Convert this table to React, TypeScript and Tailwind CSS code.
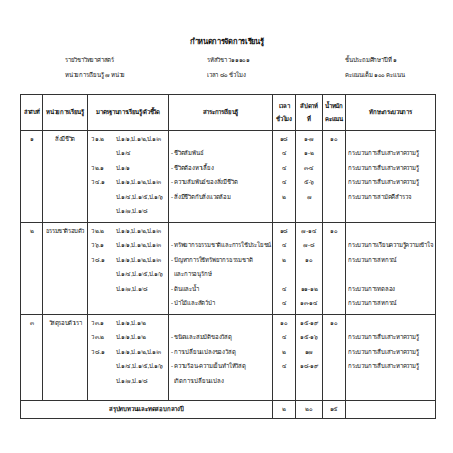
import React from "react";

type Section = {
  no: string;
  unit: string;
  standards: { code: string; text: string }[];
  content: string[];
  hours: string[];
  weeks: string[];
  weight: string[];
  skills: string[];
};

const sections: Section[] = [
  {
    no: "๑",
    unit: "สิ่งมีชีวิต",
    standards: [
      { code: "ว ๑.๒", text: "ป.๑/๑,ป.๑/๒,ป.๑/๓" },
      { code: "", text: "ป.๑/๔" },
      { code: "ว ๒.๑", text: "ป.๑/๑" },
      { code: "ว ๔.๑", text: "ป.๑/๑,ป.๑/๒,ป.๑/๓" },
      { code: "", text: "ป.๑/๔,ป.๑/๕,ป.๑/๖" },
      { code: "", text: "ป.๑/๗,ป.๑/๘" },
    ],
    content: [
      "",
      "- ชีวิตสัมพันธ์",
      "- ชีวิตต้องหาเลี้ยง",
      "- ความสัมพันธ์ของสิ่งมีชีวิต",
      "- สิ่งมีชีวิตกับสิ่งแวดล้อม",
      "",
    ],
    hours: ["๑๘", "๔", "๔", "๔", "๒", ""],
    weeks: ["๑-๗", "๑-๒", "๓-๔", "๕-๖", "๗", ""],
    weight: ["๑๐", "", "", "", "", ""],
    skills: [
      "",
      "กระบวนการสืบเสาะหาความรู้",
      "กระบวนการสืบเสาะหาความรู้",
      "กระบวนการสืบเสาะหาความรู้",
      "กระบวนการสามัคคีสำรวจ",
      "",
    ],
  },
  {
    no: "๒",
    unit: "ธรรมชาติรอบตัว",
    standards: [
      { code: "ว ๒.๒", text: "ป.๑/๑,ป.๑/๒,ป.๑/๓" },
      { code: "ว ๖.๑", text: "ป.๑/๑,ป.๑/๒,ป.๑/๓" },
      { code: "ว ๘.๑", text: "ป.๑/๑,ป.๑/๒,ป.๑/๓" },
      { code: "", text: "ป.๑/๔,ป.๑/๕,ป.๑/๖" },
      { code: "", text: "ป.๑/๗,ป.๑/๘" },
      { code: "", text: "" },
    ],
    content: [
      "",
      "- ทรัพยากรธรรมชาติและการใช้ประโยชน์",
      "- ปัญหาการใช้ทรัพยากรธรรมชาติ",
      "  และการอนุรักษ์",
      "- ดินและน้ำ",
      "- ป่าไม้และสัตว์ป่า",
    ],
    hours: ["๑๘", "๔", "๒", "", "๔", "๔"],
    weeks: ["๗-๑๔", "๗-๘", "๑๐", "", "๑๑-๑๒", "๑๓-๑๔"],
    weight: ["๑๐", "", "", "", "", ""],
    skills: [
      "",
      "กระบวนการเรียนความรู้ความเข้าใจ",
      "กระบวนการสหกรณ์",
      "",
      "กระบวนการทดลอง",
      "กระบวนการสหกรณ์",
    ],
  },
  {
    no: "๓",
    unit: "วัสดุรอบตัวเรา",
    standards: [
      { code: "ว ๓.๑", text: "ป.๑/๑,ป.๑/๒" },
      { code: "ว ๓.๒", text: "ป.๑/๑,ป.๑/๒" },
      { code: "ว ๘.๑", text: "ป.๑/๑,ป.๑/๒,ป.๑/๓" },
      { code: "", text: "ป.๑/๔,ป.๑/๕,ป.๑/๖" },
      { code: "", text: "ป.๑/๗,ป.๑/๘" },
    ],
    content: [
      "",
      "- ชนิดและสมบัติของวัสดุ",
      "- การเปลี่ยนแปลงของวัสดุ",
      "- ความร้อน-ความเย็นทำให้วัสดุ",
      "  เกิดการเปลี่ยนแปลง",
    ],
    hours: ["๑๐", "๔", "๒", "๔", ""],
    weeks: ["๑๕-๑๙", "๑๕-๑๖", "๑๗", "๑๘-๑๙", ""],
    weight: ["๑๐", "", "", "", ""],
    skills: [
      "",
      "กระบวนการสืบเสาะหาความรู้",
      "กระบวนการสืบเสาะหาความรู้",
      "กระบวนการสืบเสาะหาความรู้",
      "",
    ],
  },
];

function Lines({ items, align = "center" }: { items: string[]; align?: "center" | "left" }) {
  return (
    <div className={align === "center" ? "pt-[1px] text-center" : "pt-[1px] pl-[2px] text-left"}>
      {items.map((t, i) => (
        <div key={i} className="h-[14.4px] whitespace-pre leading-[14.4px]">
          {t}
        </div>
      ))}
    </div>
  );
}

const cell = "border border-[#333] align-top p-0";
const head = "border border-[#333] font-bold whitespace-nowrap leading-[13px] tracking-[-0.3px]";

export default function App() {
  return (
    <div
      className="w-[453px] h-[453px] overflow-hidden bg-white text-[#111] text-[6px] tracking-[-0.2px]"
      style={{ fontFamily: '"Liberation Serif", "DejaVu Serif", serif' }}
    >
      <div className="pt-[35px] h-[49px] text-center text-[7.5px] font-bold leading-[14px] tracking-[-0.3px]">
        กำหนดการจัดการเรียนรู้
      </div>

      <div className="mt-[4px] flex pl-[65px] leading-[15px]">
        <div className="w-[142px]">
          <div>รายวิชาวิทยาศาสตร์</div>
          <div>หน่วยการเรียนรู้ ๗ หน่วย</div>
        </div>
        <div className="w-[138px]">
          <div>รหัสวิชา ว๑๑๑๐๑</div>
          <div>เวลา ๘๐ ชั่วโมง</div>
        </div>
        <div>
          <div>ชั้นประถมศึกษาปีที่ ๑</div>
          <div>คะแนนเต็ม ๑๐๐ คะแนน</div>
        </div>
      </div>

      <table className="ml-[20px] mt-[11px] w-[415px] table-fixed border-collapse border border-[#333]">
        <colgroup>
          <col className="w-[22px]" />
          <col className="w-[45px]" />
          <col className="w-[81px]" />
          <col className="w-[104px]" />
          <col className="w-[23px]" />
          <col className="w-[27px]" />
          <col className="w-[23px]" />
          <col className="w-[90px]" />
        </colgroup>
        <thead>
          <tr className="h-[36px] text-center">
            <th className={`${head} text-[5.5px]`}>ลำดับที่</th>
            <th className={head}>หน่วยการเรียนรู้</th>
            <th className={head}>มาตรฐานการเรียนรู้/ตัวชี้วัด</th>
            <th className={head}>สาระการเรียนรู้</th>
            <th className={head}>
              เวลา
              <br />
              ชั่วโมง
            </th>
            <th className={head}>
              สัปดาห์
              <br />
              ที่
            </th>
            <th className={head}>
              น้ำหนัก
              <br />
              คะแนน
            </th>
            <th className={head}>ทักษะกระบวนการ</th>
          </tr>
        </thead>
        <tbody>
          {sections.map((s, idx) => (
            <tr key={s.no} className={idx === 2 ? "h-[86px]" : "h-[92px]"}>
              <td className={cell}>
                <Lines items={[s.no]} />
              </td>
              <td className={`${cell} tracking-[-0.4px]`}>
                <Lines items={[s.unit]} />
              </td>
              <td className={cell}>
                <div className="pt-[1px] pl-[3px]">
                  {s.standards.map((st, i) => (
                    <div key={i} className="flex h-[14.4px] whitespace-nowrap leading-[14.4px]">
                      <span className="w-[25px] shrink-0">{st.code}</span>
                      <span>{st.text}</span>
                    </div>
                  ))}
                </div>
              </td>
              <td className={cell}>
                <Lines items={s.content} align="left" />
              </td>
              <td className={cell}>
                <Lines items={s.hours} />
              </td>
              <td className={cell}>
                <Lines items={s.weeks} />
              </td>
              <td className={cell}>
                <Lines items={s.weight} />
              </td>
              <td className={cell}>
                <Lines items={s.skills} align="left" />
              </td>
            </tr>
          ))}
          <tr className="h-[18px] text-center">
            <td colSpan={4} className="border border-[#333] font-bold">
              สรุปทบทวนและทดสอบกลางปี
            </td>
            <td className="border border-[#333]">๒</td>
            <td className="border border-[#333]">๒๐</td>
            <td className="border border-[#333]">๑๕</td>
            <td className="border border-[#333]"></td>
          </tr>
        </tbody>
      </table>
    </div>
  );
}
